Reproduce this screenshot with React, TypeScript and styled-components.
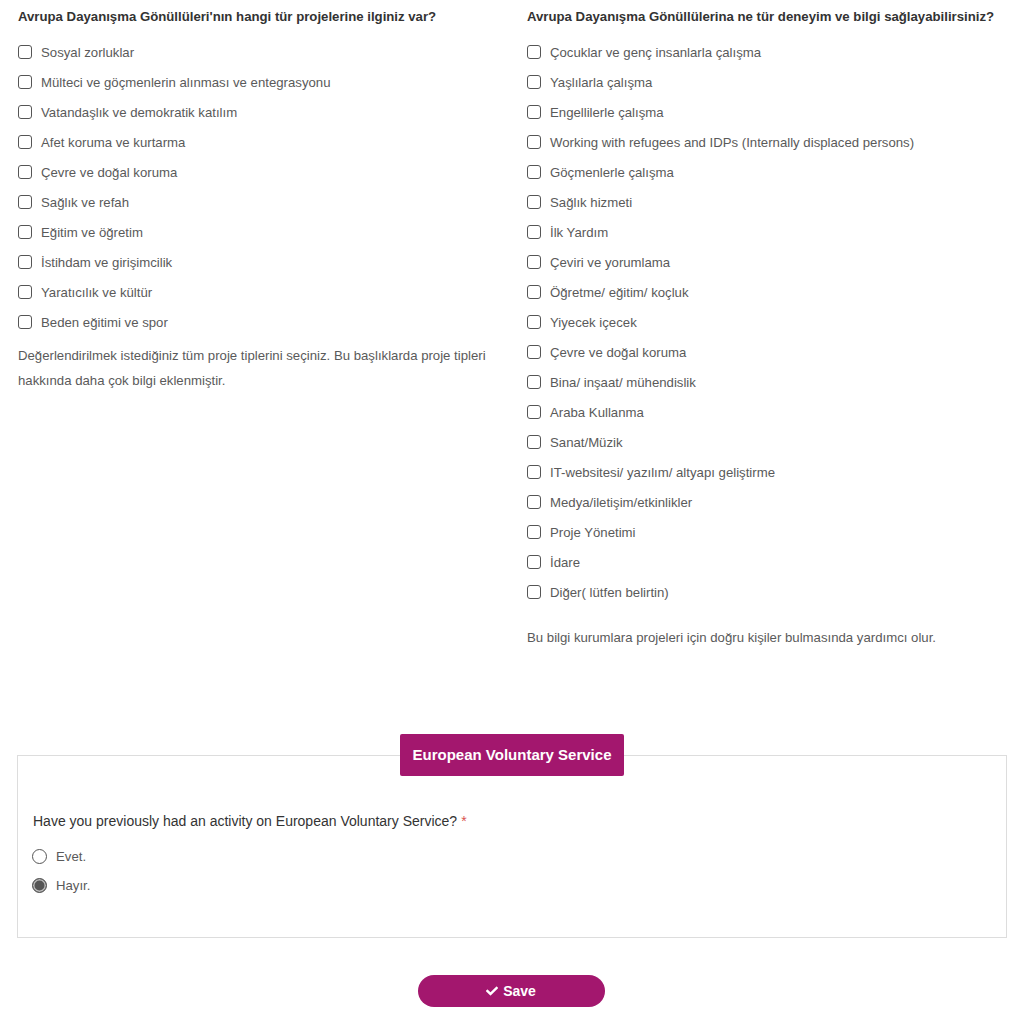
import React, { useState } from 'react';
import styled, { createGlobalStyle } from 'styled-components';
import { FaCheck } from 'react-icons/fa';

const GlobalStyle = createGlobalStyle`
  html, body {
    margin: 0;
    padding: 0;
    background: #fff;
  }
  body {
    font-family: 'Liberation Sans', Arial, sans-serif;
    color: #5a5a5a;
  }
`;

const projectTypes = [
  'Sosyal zorluklar',
  'Mülteci ve göçmenlerin alınması ve entegrasyonu',
  'Vatandaşlık ve demokratik katılım',
  'Afet koruma ve kurtarma',
  'Çevre ve doğal koruma',
  'Sağlık ve refah',
  'Eğitim ve öğretim',
  'İstihdam ve girişimcilik',
  'Yaratıcılık ve kültür',
  'Beden eğitimi ve spor',
];

const skills = [
  'Çocuklar ve genç insanlarla çalışma',
  'Yaşlılarla çalışma',
  'Engellilerle çalışma',
  'Working with refugees and IDPs (Internally displaced persons)',
  'Göçmenlerle çalışma',
  'Sağlık hizmeti',
  'İlk Yardım',
  'Çeviri ve yorumlama',
  'Öğretme/ eğitim/ koçluk',
  'Yiyecek içecek',
  'Çevre ve doğal koruma',
  'Bina/ inşaat/ mühendislik',
  'Araba Kullanma',
  'Sanat/Müzik',
  'IT-websitesi/ yazılım/ altyapı geliştirme',
  'Medya/iletişim/etkinlikler',
  'Proje Yönetimi',
  'İdare',
  'Diğer( lütfen belirtin)',
];

interface CheckGroupProps {
  title: string;
  items: string[];
  hint: string;
  hintGap: number;
}

const CheckGroup: React.FC<CheckGroupProps> = ({ title, items, hint, hintGap }) => {
  const [checked, setChecked] = useState<Record<string, boolean>>({});

  return (
    <Column>
      <GroupTitle>{title}</GroupTitle>
      <List>
        {items.map((item) => (
          <CheckRow key={item}>
            <CheckBox
              type="checkbox"
              checked={!!checked[item]}
              onChange={() => setChecked({ ...checked, [item]: !checked[item] })}
            />
            <span>{item}</span>
          </CheckRow>
        ))}
      </List>
      <Hint $gap={hintGap}>{hint}</Hint>
    </Column>
  );
};

const App: React.FC = () => {
  const [evs, setEvs] = useState<'yes' | 'no'>('no');

  return (
    <Page>
      <GlobalStyle />
      <Columns>
        <CheckGroup
          title="Avrupa Dayanışma Gönüllüleri'nın hangi tür projelerine ilginiz var?"
          items={projectTypes}
          hint="Değerlendirilmek istediğiniz tüm proje tiplerini seçiniz. Bu başlıklarda proje tipleri hakkında daha çok bilgi eklenmiştir."
          hintGap={6}
        />
        <CheckGroup
          title="Avrupa Dayanışma Gönüllülerina ne tür deneyim ve bilgi sağlayabilirsiniz?"
          items={skills}
          hint="Bu bilgi kurumlara projeleri için doğru kişiler bulmasında yardımcı olur."
          hintGap={18}
        />
      </Columns>

      <Fieldset>
        <Legend>European Voluntary Service</Legend>
        <Question>
          Have you previously had an activity on European Voluntary Service?
          <Required>*</Required>
        </Question>
        <RadioRow>
          <Radio type="radio" name="evs" checked={evs === 'yes'} onChange={() => setEvs('yes')} />
          <span>Evet.</span>
        </RadioRow>
        <RadioRow>
          <Radio type="radio" name="evs" checked={evs === 'no'} onChange={() => setEvs('no')} />
          <span>Hayır.</span>
        </RadioRow>
      </Fieldset>

      <Actions>
        <SaveButton type="button">
          <FaCheck size={12} />
          Save
        </SaveButton>
      </Actions>
    </Page>
  );
};

const Page = styled.div`
  width: 1020px;
  padding: 9px 0 17px;
  box-sizing: border-box;
`;

const Columns = styled.div`
  display: grid;
  grid-template-columns: 474px 474px;
  column-gap: 35px;
  padding: 0 18px;
`;

const Column = styled.div`
  display: flex;
  flex-direction: column;
`;

const GroupTitle = styled.h4`
  margin: 0 0 13px;
  font-size: 13.2px;
  line-height: 15px;
  font-weight: bold;
  color: #333;
`;

const List = styled.div`
  display: flex;
  flex-direction: column;
`;

const CheckRow = styled.label`
  display: flex;
  align-items: center;
  gap: 9px;
  height: 30px;
  font-size: 13.2px;
  color: #5a5a5a;
  cursor: pointer;
`;

const CheckBox = styled.input`
  appearance: none;
  margin: 0;
  width: 14px;
  height: 14px;
  border: 1.5px solid #555;
  border-radius: 3px;
  background: #fff;
  box-sizing: border-box;
  flex-shrink: 0;

  &:checked {
    background: #555;
  }
`;

const Hint = styled.p<{ $gap: number }>`
  margin: ${(p) => p.$gap}px 0 0;
  font-size: 13.2px;
  line-height: 25px;
  color: #5a5a5a;
`;

const Fieldset = styled.fieldset`
  margin: 84px 13px 0 17px;
  padding: 0 15px 37px;
  border: 1px solid #ddd;
  min-width: 0;
`;

const Legend = styled.legend`
  margin: 0 auto;
  padding: 0 13px;
  height: 42px;
  line-height: 42px;
  background: #a3176e;
  color: #fff;
  font-size: 15px;
  font-weight: bold;
  border-radius: 2px;
`;

const Question = styled.p`
  margin: 36px 0 12px;
  font-size: 14px;
  line-height: 18px;
  color: #333;
`;

const Required = styled.span`
  color: #d9534f;
  margin-left: 4px;
`;

const RadioRow = styled.label`
  display: flex;
  align-items: center;
  gap: 9px;
  height: 29px;
  font-size: 13.2px;
  color: #5a5a5a;
  cursor: pointer;
`;

const Radio = styled.input`
  appearance: none;
  margin: 0 0 0 -1px;
  width: 15px;
  height: 15px;
  border: 1.5px solid #555;
  border-radius: 50%;
  background: #fff;
  box-sizing: border-box;
  flex-shrink: 0;

  &:checked {
    background: #555;
    box-shadow: inset 0 0 0 1.5px #bbb;
  }
`;

const Actions = styled.div`
  display: flex;
  justify-content: center;
  margin-top: 37px;
  padding-left: 2px;
`;

const SaveButton = styled.button`
  display: flex;
  align-items: center;
  justify-content: center;
  gap: 5px;
  width: 187px;
  height: 32px;
  border: none;
  border-radius: 16px;
  background: #a3176e;
  color: #fff;
  font-family: 'Liberation Sans', Arial, sans-serif;
  font-size: 14px;
  font-weight: bold;
  cursor: pointer;
`;

export default App;
